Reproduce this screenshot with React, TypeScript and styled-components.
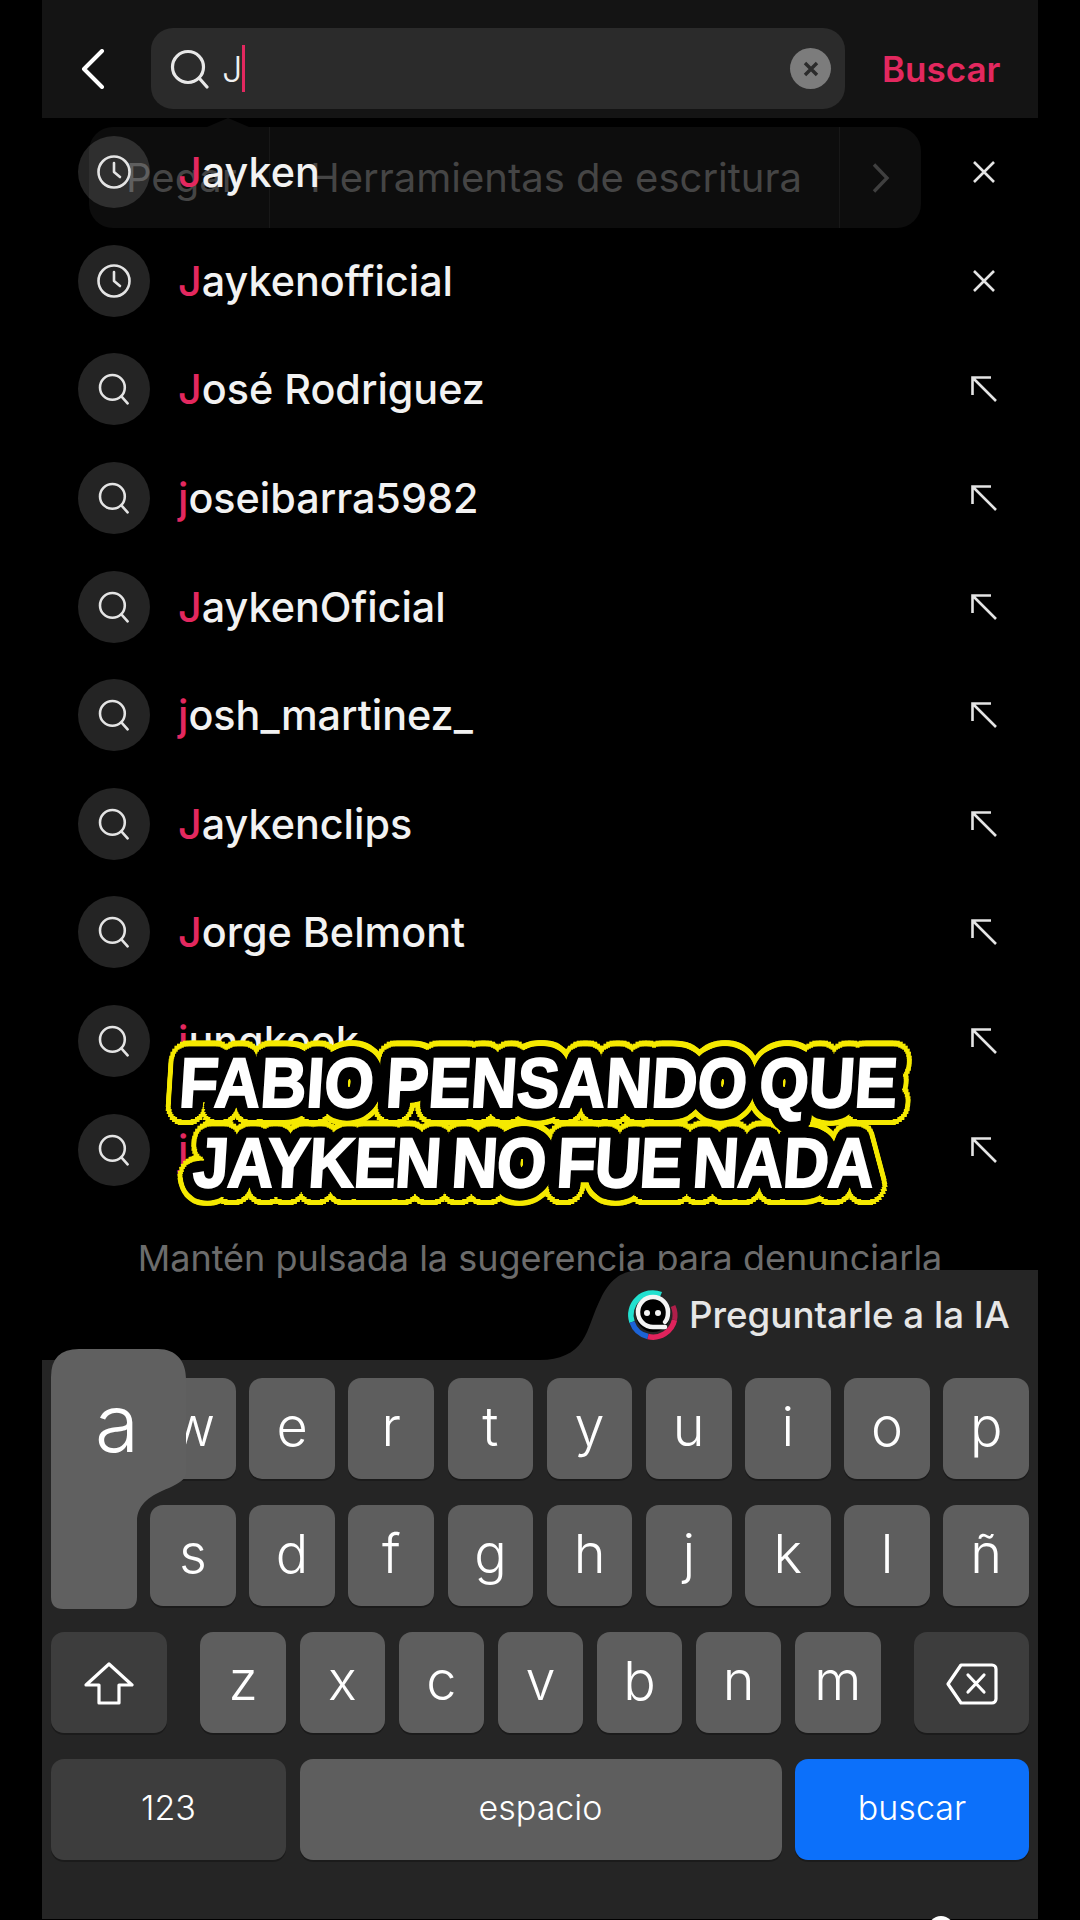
import React from "react";
import styled, { createGlobalStyle } from "styled-components";

const GlobalStyle = createGlobalStyle`
  html, body {
    margin: 0;
    padding: 0;
    background: #000;
  }
`;

type Suggestion = { text: string; recent?: boolean };

const suggestions: Suggestion[] = [
  { text: "Jayken", recent: true },
  { text: "Jaykenofficial", recent: true },
  { text: "José Rodriguez" },
  { text: "joseibarra5982" },
  { text: "JaykenOficial" },
  { text: "josh_martinez_" },
  { text: "Jaykenclips" },
  { text: "Jorge Belmont" },
  { text: "jungkook" },
  { text: "j" },
];

const topKeys = ["q", "w", "e", "r", "t", "y", "u", "i", "o", "p"];
const middleKeys = ["a", "s", "d", "f", "g", "h", "j", "k", "l", "ñ"];
const bottomKeys = ["z", "x", "c", "v", "b", "n", "m"];

// round outline for the caption, text-stroke leaves spikes on the corners
const ring = (radii: number[], color: string) =>
  radii
    .flatMap((r) =>
      Array.from({ length: 32 }, (_, i) => {
        const a = (i / 32) * Math.PI * 2;
        return `${(Math.cos(a) * r).toFixed(1)}px ${(Math.sin(a) * r).toFixed(1)}px 0 ${color}`;
      })
    )
    .join(", ");

const yellowOutline = ring([6, 12, 18], "#f5e900");
const blackOutline = ring([4, 8, 12.5], "#000");

const SearchIcon = ({ size }: { size: number }) => (
  <svg width={size} height={size} viewBox="0 0 40 40" fill="none" stroke="currentColor" strokeWidth="3.2" strokeLinecap="round">
    <circle cx="18" cy="18" r="15.5" />
    <path d="M29.5 29.5 37 38" />
  </svg>
);

const ClockIcon = () => (
  <svg width="36" height="36" viewBox="0 0 36 36" fill="none" stroke="#e4e4e4" strokeWidth="2.6" strokeLinecap="round" strokeLinejoin="round">
    <circle cx="18" cy="18" r="15.5" />
    <path d="M18 9v9l6 5" />
  </svg>
);

const CloseIcon = () => (
  <svg width="24" height="24" viewBox="0 0 24 24" fill="none" stroke="#e4e4e4" strokeWidth="2.6">
    <path d="M2 2l20 20M22 2 2 22" />
  </svg>
);

const FillIcon = () => (
  <svg width="26" height="26" viewBox="0 0 26 26" fill="none" stroke="#e4e4e4" strokeWidth="2.6">
    <path d="M1.5 19V1.5H20M1.5 1.5 25 25" />
  </svg>
);

const AiLogo = () => (
  <svg width="52" height="52" viewBox="0 0 52 52" fill="none">
    <path d="M5 33A22 22 0 0 1 34 5.5" stroke="#22e0cf" strokeWidth="5.5" />
    <path d="M5 33A22 22 0 0 0 21 47.5" stroke="#1c63d6" strokeWidth="5.5" />
    <path d="M21 47.5A22 22 0 0 0 47.5 31" stroke="#e0235c" strokeWidth="5.5" />
    <path d="M47.5 31A22 22 0 0 0 46 17" stroke="#b01f4a" strokeWidth="5" />
    <circle cx="26" cy="26" r="17" fill="#000" />
    <path d="M38 38H26A15 15 0 1 1 41 23c0 5-1 8-3 10" stroke="#f4f4f4" strokeWidth="4.5" strokeLinecap="round" />
    <circle cx="20" cy="24" r="3" fill="#f4f4f4" />
    <circle cx="31" cy="24" r="3" fill="#f4f4f4" />
  </svg>
);

const ShiftIcon = () => (
  <svg width="50" height="43" viewBox="0 0 50 43" fill="none" stroke="#fff" strokeWidth="3.2" strokeLinejoin="round">
    <path d="M25 2 48 23H35V41H15V23H2Z" />
  </svg>
);

const BackspaceIcon = () => (
  <svg width="52" height="42" viewBox="0 0 52 42" fill="none" stroke="#fff" strokeWidth="3.2" strokeLinejoin="round" strokeLinecap="round">
    <path d="M15 2H46a4 4 0 0 1 4 4V36a4 4 0 0 1-4 4H15L2 21Z" />
    <path d="M22 12 38 29M38 12 22 29" />
  </svg>
);

const App = () => {
  return (
    <Page>
      <GlobalStyle />
      <Column>
        <TopBar>
          <BackButton>
            <svg width="24" height="40" viewBox="0 0 24 40" fill="none" stroke="#fff" strokeWidth="4" strokeLinecap="round" strokeLinejoin="round">
              <path d="M21 2 3 20l18 18" />
            </svg>
          </BackButton>
          <SearchField>
            <SearchIcon size={40} />
            <Query>J</Query>
            <Caret />
            <ClearButton>
              <svg width="20" height="20" viewBox="0 0 20 20" fill="none" stroke="#2b2b2b" strokeWidth="3.4">
                <path d="M4 4l12 12M16 4 4 16" />
              </svg>
            </ClearButton>
          </SearchField>
          <SearchAction>Buscar</SearchAction>
        </TopBar>

        <List>
          {suggestions.map((item) => (
            <Row key={item.text}>
              <IconCircle>{item.recent ? <ClockIcon /> : <SearchIcon size={32} />}</IconCircle>
              <RowText>
                <Match>{item.text[0]}</Match>
                {item.text.slice(1)}
              </RowText>
              <RowAction>{item.recent ? <CloseIcon /> : <FillIcon />}</RowAction>
            </Row>
          ))}
        </List>

        <Hint>Mantén pulsada la sugerencia para denunciarla</Hint>

        <Keyboard>
          <AskRow>
            <svg width="100" height="90" viewBox="0 0 100 91" preserveAspectRatio="none">
              <path d="M100 0C82 1 72 8 62 26 52 46 50 60 42 72 34 84 20 91 0 91H100Z" fill="#252525" />
            </svg>
            <AskTab>
              <AskLogo>
                <AiLogo />
              </AskLogo>
              <AskLabel>Preguntarle a la IA</AskLabel>
            </AskTab>
          </AskRow>
          <KeyPanel>
            <LetterRow>
              {topKeys.map((k) => (
                <Key key={k}>{k}</Key>
              ))}
            </LetterRow>
            <LetterRow>
              {middleKeys.map((k) => (
                <Key key={k}>{k}</Key>
              ))}
            </LetterRow>
            <ShiftRow>
              <Key $dark $icon>
                <ShiftIcon />
              </Key>
              <ShiftLetters>
                {bottomKeys.map((k) => (
                  <Key key={k}>{k}</Key>
                ))}
              </ShiftLetters>
              <Key $dark $icon>
                <BackspaceIcon />
              </Key>
            </ShiftRow>
            <SpaceRow>
              <Key $dark $small>123</Key>
              <Key $small>espacio</Key>
              <Key $blue $small>buscar</Key>
            </SpaceRow>
            <KeyPopup>
              <svg width="135" height="260" viewBox="0 0 135 260">
                <path
                  d="M28 0H107C125 0 135 12 135 30V125C135 130 128 134 118 139 100 146 86 155 86 172V248Q86 260 74 260H12Q0 260 0 248V28Q0 0 28 0Z"
                  fill="#606060"
                />
              </svg>
              <PopupLetter>a</PopupLetter>
            </KeyPopup>
            <MicRow>
              <MicHead />
            </MicRow>
          </KeyPanel>
        </Keyboard>
      </Column>

      <PasteMenu>
        <PasteItem>Pegar</PasteItem>
        <WritingItem>Herramientas de escritura</WritingItem>
        <PasteChevron>
          <svg width="18" height="30" viewBox="0 0 18 30" fill="none" stroke="#3f3f3f" strokeWidth="3.4">
            <path d="M2 1.5 15 15 2 28.5" />
          </svg>
        </PasteChevron>
      </PasteMenu>

      <Caption>
        <CaptionLine data-text="FABIO PENSANDO QUE">FABIO PENSANDO QUE</CaptionLine>
        <CaptionLine data-text="JAYKEN NO FUE NADA" $tight>JAYKEN NO FUE NADA</CaptionLine>
      </Caption>
    </Page>
  );
};

export default App;

const Page = styled.div`
  position: relative;
  width: 1080px;
  height: 1920px;
  overflow: hidden;
  background: #000;
  font-family: "Inter", "Liberation Sans", sans-serif;
`;
const Column = styled.div`
  margin: 0 42px;
  display: flex;
  flex-direction: column;
`;
const TopBar = styled.div`
  height: 118px;
  box-sizing: border-box;
  padding: 28px 0 9px 39px;
  background: #141414;
  display: flex;
  align-items: stretch;
`;
const BackButton = styled.div`
  width: 70px;
  display: flex;
  align-items: center;
  margin-top: 1px;
`;
const SearchField = styled.div`
  width: 694px;
  box-sizing: border-box;
  padding: 0 14px 0 19px;
  border-radius: 22px;
  background: #2b2b2b;
  color: #e8e8e8;
  display: flex;
  align-items: center;
`;
const Query = styled.span`
  margin-left: 12px;
  font-size: 36px;
  font-weight: 300;
  color: #f0f0f0;
`;
const Caret = styled.span`
  width: 3px;
  height: 47px;
  background: #e3285f;
`;
const ClearButton = styled.div`
  width: 41px;
  height: 41px;
  margin-left: auto;
  border-radius: 50%;
  background: #7c7c7c;
  display: flex;
  align-items: center;
  justify-content: center;
`;
const SearchAction = styled.div`
  margin-left: 37px;
  align-self: center;
  font-size: 35px;
  font-weight: 600;
  color: #e3285f;
`;
const List = styled.div`
  position: relative;
  z-index: 1;
  display: flex;
  flex-direction: column;
`;
const Row = styled.div`
  height: 108.6px;
  padding: 0 40px 0 36px;
  display: flex;
  align-items: center;
`;
const IconCircle = styled.div`
  width: 72px;
  height: 72px;
  flex: none;
  border-radius: 50%;
  background: rgba(255, 255, 255, 0.14);
  color: #e4e4e4;
  display: flex;
  align-items: center;
  justify-content: center;
`;
const RowText = styled.div`
  flex: 1;
  margin-left: 28px;
  font-size: 41.3px;
  font-weight: 500;
  color: #f2f2f2;
  white-space: nowrap;
`;
const Match = styled.span`
  color: #e3285f;
`;
const RowAction = styled.div`
  width: 28px;
  display: flex;
  justify-content: center;
`;
const Hint = styled.div`
  height: 66px;
  box-sizing: border-box;
  padding-top: 31px;
  text-align: center;
  font-size: 36px;
  line-height: 46px;
  color: #6c6c6c;
  white-space: nowrap;
`;
const Keyboard = styled.div`
  position: relative;
  z-index: 2;
`;
const AskRow = styled.div`
  height: 90px;
  display: flex;
  justify-content: flex-end;
`;
const AskTab = styled.div`
  width: 398px;
  box-sizing: border-box;
  background: #252525;
  display: flex;
  align-items: center;
`;
const AskLogo = styled.div`
  margin-left: -13px;
  display: flex;
`;
const AskLabel = styled.span`
  margin-left: 10px;
  font-size: 36.7px;
  font-weight: 500;
  color: #e6e6e6;
  white-space: nowrap;
`;
const KeyPanel = styled.div`
  position: relative;
  height: 559px;
  box-sizing: border-box;
  padding: 18px 9px 0;
  background: #252525;
  display: flex;
  flex-direction: column;
  gap: 26px;
`;
const LetterRow = styled.div`
  display: grid;
  grid-template-columns: repeat(10, 1fr);
  column-gap: 13.5px;
`;
const Key = styled.div<{ $dark?: boolean; $blue?: boolean; $small?: boolean; $icon?: boolean }>`
  height: 101px;
  box-sizing: border-box;
  padding: ${(p) => (p.$icon ? "3px 0 0" : "0 0 4px")};
  border-radius: 13px;
  background: ${(p) => (p.$blue ? "#0c70fa" : p.$dark ? "#3d3d3d" : "#5e5e5e")};
  box-shadow: 0 2px 0 rgba(0, 0, 0, 0.25);
  color: #fff;
  font-size: ${(p) => (p.$small ? "34px" : "54px")};
  font-weight: 300;
  display: flex;
  align-items: center;
  justify-content: center;
`;
const ShiftRow = styled.div`
  display: grid;
  grid-template-columns: 116px auto 115px;
  justify-content: space-between;
`;
const ShiftLetters = styled.div`
  display: grid;
  grid-template-columns: repeat(7, 85.6px);
  column-gap: 13.5px;
`;
const SpaceRow = styled.div`
  display: grid;
  grid-template-columns: 235px 1fr 234px;
  column-gap: 13.5px;
`;
const KeyPopup = styled.div`
  position: absolute;
  left: 9px;
  top: -11px;
  width: 135px;
  height: 260px;
`;
const PopupLetter = styled.span`
  position: absolute;
  width: 86px;
  left: 23px;
  top: 29px;
  text-align: center;
  color: #fff;
  font-size: 80px;
  font-weight: 300;
  line-height: 90px;
`;
const MicRow = styled.div`
  display: flex;
  justify-content: flex-end;
  padding: 30px 75px 0 0;
`;
const MicHead = styled.div`
  width: 26px;
  height: 26px;
  border-radius: 13px 13px 0 0;
  background: #fff;
`;
const PasteMenu = styled.div`
  position: absolute;
  left: 89px;
  top: 127px;
  width: 832px;
  height: 101px;
  border-radius: 24px;
  background: #0d0d0d;
  display: flex;
  align-items: stretch;
  color: #454545;
  font-size: 40px;
  &::before {
    content: "";
    position: absolute;
    left: 118px;
    top: -9px;
    border-left: 21px solid transparent;
    border-right: 21px solid transparent;
    border-bottom: 9px solid #0d0d0d;
  }
`;
const PasteItem = styled.div`
  width: 181px;
  box-sizing: border-box;
  padding-left: 37px;
  display: flex;
  align-items: center;
  border-right: 1px solid #181818;
`;
const WritingItem = styled.div`
  width: 570px;
  box-sizing: border-box;
  padding-left: 40px;
  display: flex;
  align-items: center;
  border-right: 1px solid #181818;
  white-space: nowrap;
`;
const PasteChevron = styled.div`
  flex: 1;
  display: flex;
  align-items: center;
  justify-content: center;
`;
const Caption = styled.div`
  position: absolute;
  z-index: 3;
  left: 0;
  width: 1072px;
  top: 1043px;
  isolation: isolate;
  display: flex;
  flex-direction: column;
  align-items: center;
  transform: scaleX(0.91) skewX(-4deg);
`;
const CaptionLine = styled.div<{ $tight?: boolean }>`
  position: relative;
  font-family: "Liberation Sans", sans-serif;
  font-size: 70px;
  font-weight: 700;
  line-height: 80px;
  letter-spacing: ${(p) => (p.$tight ? "-1px" : "0")};
  word-spacing: -6px;
  white-space: nowrap;
  color: #fff;
  -webkit-text-stroke: 2px #fff;
  &::before,
  &::after {
    content: attr(data-text);
    position: absolute;
    left: 0;
    top: 0;
    -webkit-text-stroke: 0;
  }
  &::before {
    z-index: -2;
    color: #f5e900;
    text-shadow: ${yellowOutline};
  }
  &::after {
    z-index: -1;
    color: #000;
    text-shadow: ${blackOutline};
  }
`;
